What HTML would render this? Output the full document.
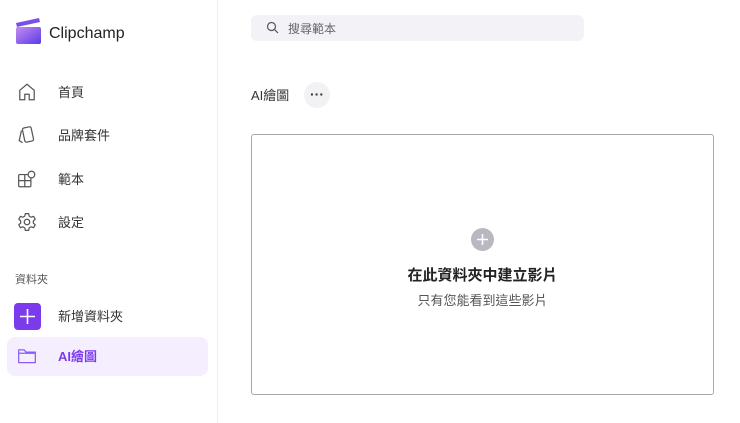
<!DOCTYPE html>
<html><head><meta charset="utf-8"><style>
*{margin:0;padding:0;box-sizing:border-box}
body{width:740px;height:423px;background:#fff;font-family:"Liberation Sans","Noto Sans CJK TC",sans-serif;position:relative;overflow:hidden;color:#333}
.side{position:absolute;left:0;top:0;width:218px;height:423px;border-right:1px solid #f0f0f2;background:#fff}
.abs{position:absolute}
.nav{position:absolute;left:58px;font-size:13px;color:#333}
.ic{position:absolute;left:17px}
</style></head><body>
<div class="side">
 <svg class="abs" style="left:15px;top:18px" width="27" height="27" viewBox="0 0 27 27">
  <defs><linearGradient id="g" x1="0" y1="0" x2="1" y2="1"><stop offset="0" stop-color="#c58df0"/><stop offset="1" stop-color="#5a3be6"/></linearGradient></defs>
  <path d="M1 5 L24 0 L25 4 L2 9Z" fill="#7a4fe8"/>
  <rect x="1" y="9" width="25" height="17" rx="2" fill="url(#g)"/>
 </svg>
 <div class="abs" style="left:49px;top:25px;font-size:16px;color:#222">Clipchamp</div>
 <svg class="ic" style="top:82px" width="20" height="20" viewBox="0 0 18 18" fill="none" stroke="#555" stroke-width="1.1"><path d="M2.5 16V7.5L9 2l6.5 5.5V16h-4.5v-5h-4v5z" stroke-linejoin="round"/></svg>
 <div class="nav" style="top:82px">首頁</div>
 <svg class="ic" style="top:125px" width="20" height="20" viewBox="0 0 18 18" fill="none" stroke="#555" stroke-width="1.1"><rect x="6" y="2" width="8" height="13" rx="1.5" transform="rotate(-12 10 9)"/><path d="M4 5 L2 14 L5 16"/></svg>
 <div class="nav" style="top:125px">品牌套件</div>
 <svg class="ic" style="top:169px" width="20" height="20" viewBox="0 0 18 18" fill="none" stroke="#555" stroke-width="1.1"><rect x="1.5" y="5" width="11" height="11" rx="1"/><path d="M7 5v11M1.5 10.5h11"/><circle cx="13" cy="5" r="3" fill="#fff"/></svg>
 <div class="nav" style="top:169px">範本</div>
 <svg class="ic" style="top:212px" width="20" height="20" viewBox="0 0 18 18" fill="none" stroke="#555" stroke-width="1.1"><path d="M7.5 1.5h3l.5 2.2 1.8 1 2.1-.8 1.5 2.6-1.7 1.5v2l1.7 1.5-1.5 2.6-2.1-.8-1.8 1-.5 2.200h-3l-.5-2.2-1.8-1-2.1.8-1.5-2.6 1.7-1.5v-2L1.6 6.5l1.5-2.6 2.1.8 1.8-1z" stroke-linejoin="round"/><circle cx="9" cy="9" r="2.5"/></svg>
 <div class="nav" style="top:212px">設定</div>
 <div class="abs" style="left:15px;top:271px;font-size:11px;color:#555">資料夾</div>
 <div class="abs" style="left:14px;top:303px;width:27px;height:27px;border-radius:4px;background:#7c3aed"></div>
 <svg class="abs" style="left:14px;top:303px" width="27" height="27"><path d="M13.5 6v15M6 13.5h15" stroke="#fff" stroke-width="1.6"/></svg>
 <div class="nav" style="top:306px">新增資料夾</div>
 <div class="abs" style="left:7px;top:337px;width:201px;height:39px;border-radius:8px;background:#f4eefe"></div>
 <svg class="ic" style="top:347px" width="20" height="18" viewBox="0 0 18 16" fill="none" stroke="#8b5cf6" stroke-width="1.1"><path d="M1.5 2.5h5l1.5 2h8.5v9.5h-15z M1.5 5.5h15" stroke-linejoin="round"/></svg>
 <div class="nav" style="top:346px;color:#7c3aed;font-weight:bold">AI繪圖</div>
</div>
<div class="abs" style="left:251px;top:15px;width:333px;height:26px;border-radius:6px;background:#f3f3f7"></div>
<svg class="abs" style="left:266px;top:21px" width="13" height="13" viewBox="0 0 13 13" fill="none" stroke="#555" stroke-width="1.2"><circle cx="5.5" cy="5.5" r="4"/><path d="M8.4 8.4 12 12"/></svg>
<div class="abs" style="left:288px;top:20px;font-size:12px;color:#666">搜尋範本</div>
<div class="abs" style="left:251px;top:85px;font-size:13px;color:#333">AI繪圖</div>
<div class="abs" style="left:304px;top:82px;width:26px;height:26px;border-radius:50%;background:#f2f2f4;display:flex;align-items:center;justify-content:center;font-size:14px;font-weight:bold;color:#333"><span style="margin-top:-3px">···</span></div>
<div class="abs" style="left:251px;top:134px;width:463px;height:261px;border:1px solid #a8a8ac;border-radius:3px"></div>
<div class="abs" style="left:471px;top:228px;width:23px;height:23px;border-radius:50%;background:#b8b8c0"></div>
<svg class="abs" style="left:471px;top:228px" width="23" height="23"><path d="M11.5 6v11M6 11.5h11" stroke="#fff" stroke-width="1.6"/></svg>
<div class="abs" style="left:251px;width:463px;top:264px;text-align:center;font-size:15px;font-weight:bold;color:#222">在此資料夾中建立影片</div>
<div class="abs" style="left:251px;width:463px;top:290px;text-align:center;font-size:13px;color:#555">只有您能看到這些影片</div>
</body></html>
